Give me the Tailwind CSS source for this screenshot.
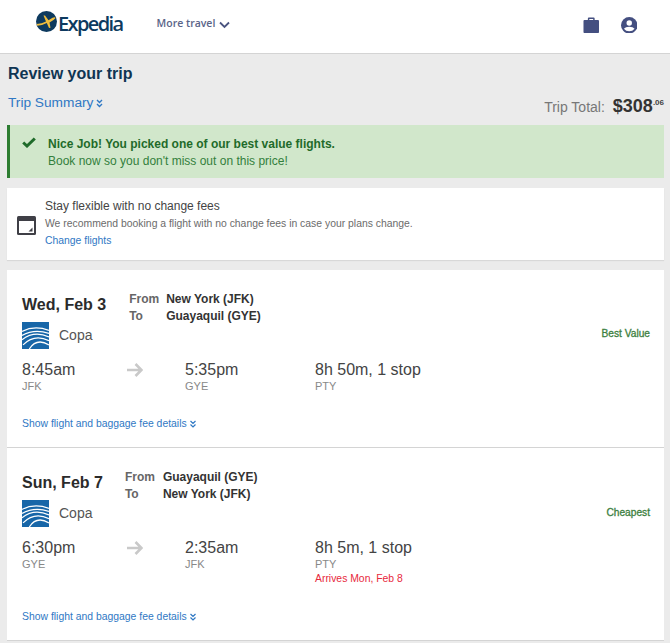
<!DOCTYPE html>
<html lang="en">
<head>
    <meta charset="UTF-8">
    <title>Review your trip</title>
    <script src="https://cdn.jsdelivr.net/npm/@tailwindcss/browser@4"></script>
</head>
<body class="bg-[#ebebeb] font-['Liberation_Sans',Arial,sans-serif] h-[643px] overflow-hidden">
    <!-- Header -->
    <header class="bg-white h-[54px] border-b border-[#d4d4d4] flex items-center pl-[36px] pr-[33px]">
        <svg class="w-[21px] h-[21px] mt-[-11px]" viewBox="0 0 21 21">
            <circle cx="10.5" cy="10.5" r="10.5" fill="#0d3a5f"/>
            <path d="M0.6 13 Q6 12.5 10 10.5 L7.5 4.5 L9 4.5 L12.5 9.2 L16.5 6.8 Q19 5.6 19.5 6.6 Q19.8 7.6 17.5 9 L13.5 11.4 L14.5 16.8 L13 17 L10.8 12 Q6 14.4 1.2 14.8 Z" fill="#f0bd3c"/>
        </svg>
        <span class="ml-[1px] mt-[-5px] text-[20px] font-semibold font-['Open_Sans',sans-serif] tracking-[-1.6px] text-[#0d3a5f]">Expedia</span>
        <span class="ml-[34px] text-[10.5px] font-['Open_Sans',sans-serif] font-semibold text-[#5a6488] mt-[-5px]">More travel</span>
        <svg class="w-[11px] h-[8px] ml-[4px] mt-[-4px]" viewBox="0 0 11 8" fill="none" stroke="#4a5480" stroke-width="1.8"><path d="M1 1.5 L5.5 6 L10 1.5"/></svg>
        <svg class="w-[16.5px] h-[16.5px] ml-auto mt-[-3px]" viewBox="0 0 17 17" fill="#444f80">
            <path d="M5 3 V1.5 Q5 0.5 6 0.5 H11 Q12 0.5 12 1.5 V3 H15.5 Q16.5 3 16.5 4 V15.5 Q16.5 16.5 15.5 16.5 H1.5 Q0.5 16.5 0.5 15.5 V4 Q0.5 3 1.5 3 Z M6.5 3 H10.5 V2 H6.5 Z" fill-rule="evenodd"/>
        </svg>
        <svg class="w-[16.5px] h-[16.5px] ml-[21.5px] mt-[-3px]" viewBox="0 0 17 17">
            <circle cx="8.5" cy="8.5" r="8.5" fill="#444f80"/>
            <circle cx="8.5" cy="6.2" r="2.8" fill="#fff"/>
            <path d="M3 12.2 Q4.5 10 8.5 10 Q12.5 10 14 12.2 Q12 14.8 8.5 14.8 Q5 14.8 3 12.2 Z" fill="#fff"/>
        </svg>
    </header>

    <main class="pl-[7px] pr-[6px]">
        <h1 class="text-[16px] leading-[20px] font-bold text-[#0f3553] pl-[1px] pt-[10px]">Review your trip</h1>
        <div class="flex items-end justify-between mt-[10px] h-[24px]">
            <div class="flex items-center self-start pl-[1px] text-[13.7px] leading-[18px] text-[#2f78c4]">
                Trip Summary
                <svg class="w-[7px] h-[9px] ml-[3px]" viewBox="0 0 7 9" fill="none" stroke="#2f78c4" stroke-width="1.4"><path d="M1 1 L3.5 3.5 L6 1 M1 5 L3.5 7.5 L6 5"/></svg>
            </div>
            <div class="flex items-baseline text-[#333]">
                <span class="text-[14px] text-[#777] mr-[8px]">Trip Total:</span>
                <span class="text-[18px] font-bold leading-[22px]">$308</span>
                <span class="text-[8px] font-bold self-start mt-[2px] text-[#444]">.06</span>
            </div>
        </div>

        <!-- Success banner -->
        <div class="mt-[7px] h-[53px] bg-[#d1e7cb] border-l-[3px] border-[#2e7d32] flex">
            <svg class="w-[14px] h-[11px] ml-[12px] mt-[12px]" viewBox="0 0 14 11" fill="none" stroke="#1f6b2a" stroke-width="3"><path d="M1.2 5.5 L5 9 L12.8 1.5"/></svg>
            <div class="ml-[12px] pt-[11px] text-[12px] leading-[17px]">
                <p class="font-bold text-[#1f6b2a]">Nice Job! You picked one of our best value flights.</p>
                <p class="text-[#33803c]">Book now so you don't miss out on this price!</p>
            </div>
        </div>

        <!-- No change fees -->
        <div class="mt-[10px] h-[72px] bg-white flex items-center shadow-[0_1px_1px_rgba(0,0,0,0.08)]">
            <svg class="w-[19px] h-[19px] ml-[10px] mt-[2px]" viewBox="0 0 19 19">
                <rect x="0" y="0" width="19" height="19" rx="1.5" fill="#3f3f46"/>
                <rect x="2" y="5" width="15" height="12" fill="#fff"/>
                <path d="M15.5 11.5 V15.5 H11.5 Z" fill="#3f3f46"/>
            </svg>
            <div class="ml-[9px]">
                <p class="text-[12px] leading-[17px] text-[#444]">Stay flexible with no change fees</p>
                <p class="text-[10.4px] leading-[17px] text-[#6b6b6b]">We recommend booking a flight with no change fees in case your plans change.</p>
                <a class="block text-[10.4px] leading-[18px] text-[#2f78c4]">Change flights</a>
            </div>
        </div>

        <!-- Flights -->
        <section class="mt-[10px] bg-white">
            <article class="relative h-[178px] border-b border-[#d4d4d4] pl-[15px] pt-[21px]">
                <div class="flex">
                    <h2 class="text-[16px] leading-[28px] font-bold text-[#2b2b2b]">Wed, Feb 3</h2>
                    <div class="ml-[23px] text-[12px] leading-[17px] font-bold">
                        <div class="flex"><span class="w-[37px] text-[#666]">From</span><span class="text-[#333]">New York (JFK)</span></div>
                        <div class="flex"><span class="w-[37px] text-[#666]">To</span><span class="text-[#333]">Guayaquil (GYE)</span></div>
                    </div>
                </div>
                <div class="flex mt-[-3px]">
                    <svg class="w-[27px] h-[27px]" viewBox="0 0 26 26">
                        <rect width="26" height="26" fill="#1766a8"/>
                        <path d="M0 9 Q12 3 26 8 M0 13 Q12 6 26 11 M0 17 Q12 8 26 14.5 M1 22 Q12 11 26 18 M7 26 Q14 15 26 22" fill="none" stroke="#fff" stroke-width="1.2"/>
                    </svg>
                    <span class="ml-[10px] text-[14px] leading-[26px] text-[#555]">Copa</span>
                </div>
                <div class="flex mt-[11px] text-[16px] leading-[20px] text-[#444]">
                    <div class="w-[105px]">8:45am<p class="text-[11px] leading-[13px] text-[#888]">JFK</p></div>
                    <svg class="w-[16px] h-[14px] mt-[3px]" viewBox="0 0 16 14" fill="none" stroke="#c9c9c9" stroke-width="2.6"><path d="M0 7 H14 M8.5 1 L14.5 7 L8.5 13"/></svg>
                    <div class="ml-[42px] w-[130px]">5:35pm<p class="text-[11px] leading-[13px] text-[#888]">GYE</p></div>
                    <div>8h 50m, 1 stop<p class="text-[11px] leading-[13px] text-[#888]">PTY</p></div>
                </div>
                <a class="flex items-center mt-[23px] text-[10.4px] leading-[16px] text-[#2f78c4]">Show flight and baggage fee details
                    <svg class="w-[6px] h-[8px] ml-[3px]" viewBox="0 0 6 8" fill="none" stroke="#2f78c4" stroke-width="1.2"><path d="M0.5 1 L3 3.5 L5.5 1 M0.5 4.5 L3 7 L5.5 4.5"/></svg>
                </a>
                <span class="absolute right-[14px] top-[56px] text-[10.2px] [-webkit-text-stroke:0.3px] text-[#3c8040]">Best Value</span>
            </article>

            <article class="relative h-[193px] border-b border-[#d4d4d4] pl-[15px] pt-[21px]">
                <div class="flex">
                    <h2 class="text-[16px] leading-[28px] font-bold text-[#2b2b2b]">Sun, Feb 7</h2>
                    <div class="ml-[22px] text-[12px] leading-[17px] font-bold">
                        <div class="flex"><span class="w-[38px] text-[#666]">From</span><span class="text-[#333]">Guayaquil (GYE)</span></div>
                        <div class="flex"><span class="w-[38px] text-[#666]">To</span><span class="text-[#333]">New York (JFK)</span></div>
                    </div>
                </div>
                <div class="flex mt-[-3px]">
                    <svg class="w-[27px] h-[27px]" viewBox="0 0 26 26">
                        <rect width="26" height="26" fill="#1766a8"/>
                        <path d="M0 9 Q12 3 26 8 M0 13 Q12 6 26 11 M0 17 Q12 8 26 14.5 M1 22 Q12 11 26 18 M7 26 Q14 15 26 22" fill="none" stroke="#fff" stroke-width="1.2"/>
                    </svg>
                    <span class="ml-[10px] text-[14px] leading-[26px] text-[#555]">Copa</span>
                </div>
                <div class="flex mt-[11px] text-[16px] leading-[20px] text-[#444]">
                    <div class="w-[105px]">6:30pm<p class="text-[11px] leading-[13px] text-[#888]">GYE</p></div>
                    <svg class="w-[16px] h-[14px] mt-[3px]" viewBox="0 0 16 14" fill="none" stroke="#c9c9c9" stroke-width="2.6"><path d="M0 7 H14 M8.5 1 L14.5 7 L8.5 13"/></svg>
                    <div class="ml-[42px] w-[130px]">2:35am<p class="text-[11px] leading-[13px] text-[#888]">JFK</p></div>
                    <div>8h 5m, 1 stop<p class="text-[11px] leading-[13px] text-[#888]">PTY</p><p class="text-[10.4px] leading-[15px] text-[#e8283c]">Arrives Mon, Feb 8</p></div>
                </div>
                <a class="flex items-center mt-[23px] text-[10.4px] leading-[16px] text-[#2f78c4]">Show flight and baggage fee details
                    <svg class="w-[6px] h-[8px] ml-[3px]" viewBox="0 0 6 8" fill="none" stroke="#2f78c4" stroke-width="1.2"><path d="M0.5 1 L3 3.5 L5.5 1 M0.5 4.5 L3 7 L5.5 4.5"/></svg>
                </a>
                <span class="absolute right-[14px] top-[57px] text-[10.2px] [-webkit-text-stroke:0.3px] text-[#3c8040]">Cheapest</span>
            </article>
        </section>
    </main>
</body>
</html>
